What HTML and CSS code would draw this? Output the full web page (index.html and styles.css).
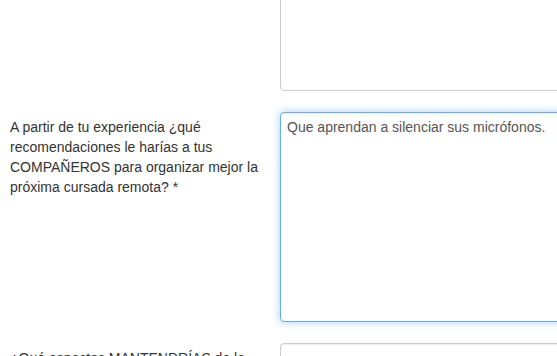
FILE: index.html
```html
<!DOCTYPE html>
<html lang="es">
<head>
<meta charset="UTF-8">
<meta name="viewport" content="width=device-width, initial-scale=1.0">
<title>Encuesta cursada remota</title>
<link rel="stylesheet" href="styles.css">
</head>
<body>

<form class="survey">
  <!-- previous question, scrolled mostly out of view -->
  <div class="form-row">
    <label class="form-label" for="q1">¿Qué fue lo que más te costó de la cursada remota?</label>
    <textarea class="form-control" id="q1"></textarea>
  </div>

  <div class="form-row">
    <label class="form-label" for="q2">A partir de tu experiencia ¿qué recomendaciones le harías a tus COMPAÑEROS para organizar mejor la próxima cursada remota? *</label>
    <textarea class="form-control is-focused" id="q2">Que aprendan a silenciar sus micrófonos.</textarea>
  </div>

  <div class="form-row">
    <label class="form-label" for="q3">¿Qué aspectos MANTENDRÍAS de la cursada remota para las próximas cursadas presenciales?</label>
    <textarea class="form-control" id="q3"></textarea>
  </div>
</form>

</body>
</html>
```

FILE: styles.css
```css
/* Survey form */
body {
margin: 0;
font-family: "Liberation Sans", Arial, sans-serif;
font-size: 14px;
line-height: 20px;
color: #333;
background-color: #fff;
overflow: hidden;
}

.survey {
margin-top: -119px; /* page is scrolled */
padding-left: 10px;
}

.form-row {
display: flex;
align-items: flex-start;
gap: 10px;
margin-bottom: 21px;
}

.form-label {
width: 260px;
flex-shrink: 0;
padding-top: 5px;
}

.form-control {
width: 320px;
height: 210px;
flex-shrink: 0;
box-sizing: border-box;
margin: 0;
padding: 4px 6px;
font-family: inherit;
font-size: 14px;
line-height: 20px;
color: #555;
background-color: #fff;
border: 1px solid #ccc;
border-radius: 4px;
box-shadow: inset 0 1px 1px rgba(0, 0, 0, 0.075);
resize: vertical;
outline: none;
}

.form-control.is-focused {
border-color: #66afe9;
box-shadow: inset 0 1px 1px rgba(0, 0, 0, 0.075), 0 0 8px rgba(102, 175, 233, 0.6);
}
```
